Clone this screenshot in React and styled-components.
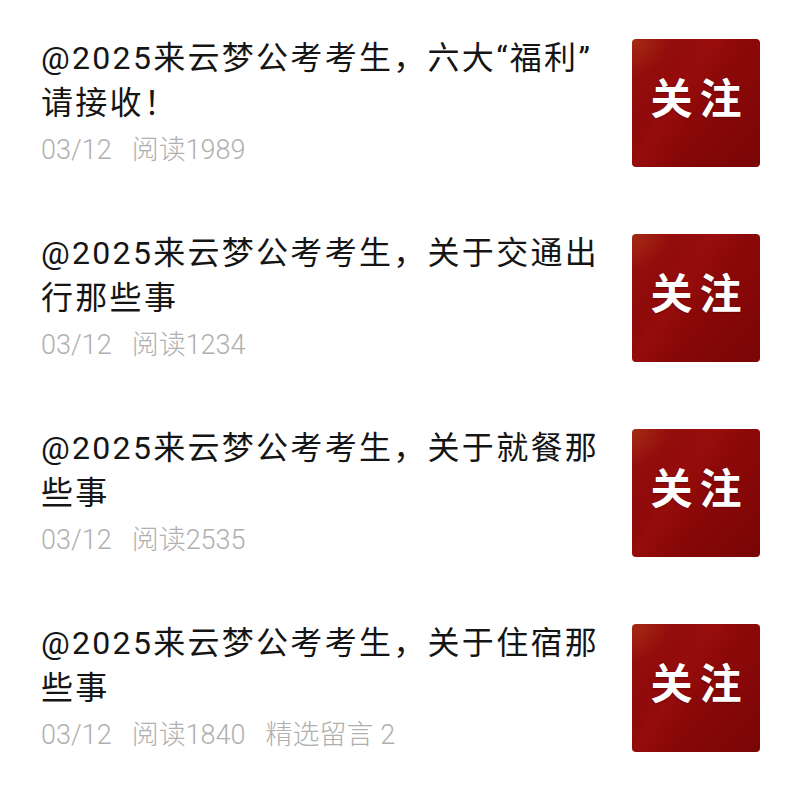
import React from "react";
import styled, { createGlobalStyle } from "styled-components";

const GlobalStyle = createGlobalStyle`
  html, body {
    margin: 0;
    padding: 0;
    background: #ffffff;
  }
  body {
    font-family: Roboto, "Noto Sans CJK SC", sans-serif;
  }
`;

const Page = styled.div`
  width: 800px;
  height: 795px;
  box-sizing: border-box;
  background: #ffffff;
  display: flex;
  flex-direction: column;
  overflow: hidden;
`;

const List = styled.div`
  display: flex;
  flex-direction: column;
  padding: 39px 40px 0 41px;
  flex: 1;
`;

const Item = styled.div`
  display: flex;
  align-items: flex-start;
  justify-content: space-between;
  height: 195px;
`;

const Info = styled.div`
  width: 572px;
  display: flex;
  flex-direction: column;
`;

const Title = styled.div`
  font-family: Roboto, "Noto Sans CJK SC", sans-serif;
  font-size: 32px;
  line-height: 45px;
  letter-spacing: 2.3px;
  color: #151515;
  margin-top: -3px;
  line-break: anywhere;
`;

const Meta = styled.div`
  display: flex;
  gap: 20px;
  margin-top: 6px;
  font-family: Roboto, "Noto Sans CJK SC", sans-serif;
  font-size: 27px;
  line-height: 36px;
  font-weight: 300;
  color: #b0b0b0;
`;

const Follow = styled.div`
  flex: none;
  width: 128px;
  height: 128px;
  border-radius: 4px;
  display: flex;
  align-items: center;
  justify-content: center;
  padding-bottom: 16px;
  box-sizing: border-box;
  background:
    linear-gradient(
      122deg,
      rgba(255, 255, 255, 0) 26%,
      rgba(215, 35, 30, 0.14) 40%,
      rgba(255, 255, 255, 0) 56%
    ),
    radial-gradient(circle at 0% 0%, rgba(165, 48, 20, 0.85) 0%, rgba(160, 30, 15, 0) 20%),
    linear-gradient(135deg, #9a110f 0%, #8c0909 40%, #890808 60%, #7a0505 100%);
  font-family: "Noto Sans CJK SC", sans-serif;
  font-weight: 700;
  font-size: 42px;
  letter-spacing: 7px;
  text-indent: 7px;
  color: #ffffff;
  text-shadow: 0 1px 2px rgba(60, 0, 0, 0.45);
`;

const HomeBar = styled.div`
  align-self: center;
  width: 320px;
  height: 5px;
  border-radius: 3px;
  background: #c4c4c4;
  margin-bottom: 1px;
`;

const items = [
  { title: "@2025来云梦公考考生，六大“福利”请接收！", date: "03/12", read: "阅读1989" },
  { title: "@2025来云梦公考考生，关于交通出行那些事", date: "03/12", read: "阅读1234" },
  { title: "@2025来云梦公考考生，关于就餐那些事", date: "03/12", read: "阅读2535" },
  { title: "@2025来云梦公考考生，关于住宿那些事", date: "03/12", read: "阅读1840", extra: "精选留言 2" },
];

export default function App() {
  return (
    <Page>
      <GlobalStyle />
      <List>
        {items.map((it, i) => (
          <Item key={i}>
            <Info>
              <Title>{it.title}</Title>
              <Meta>
                <span>{it.date}</span>
                <span>{it.read}</span>
                {it.extra && <span>{it.extra}</span>}
              </Meta>
            </Info>
            <Follow>关注</Follow>
          </Item>
        ))}
      </List>
      <HomeBar />
    </Page>
  );
}
